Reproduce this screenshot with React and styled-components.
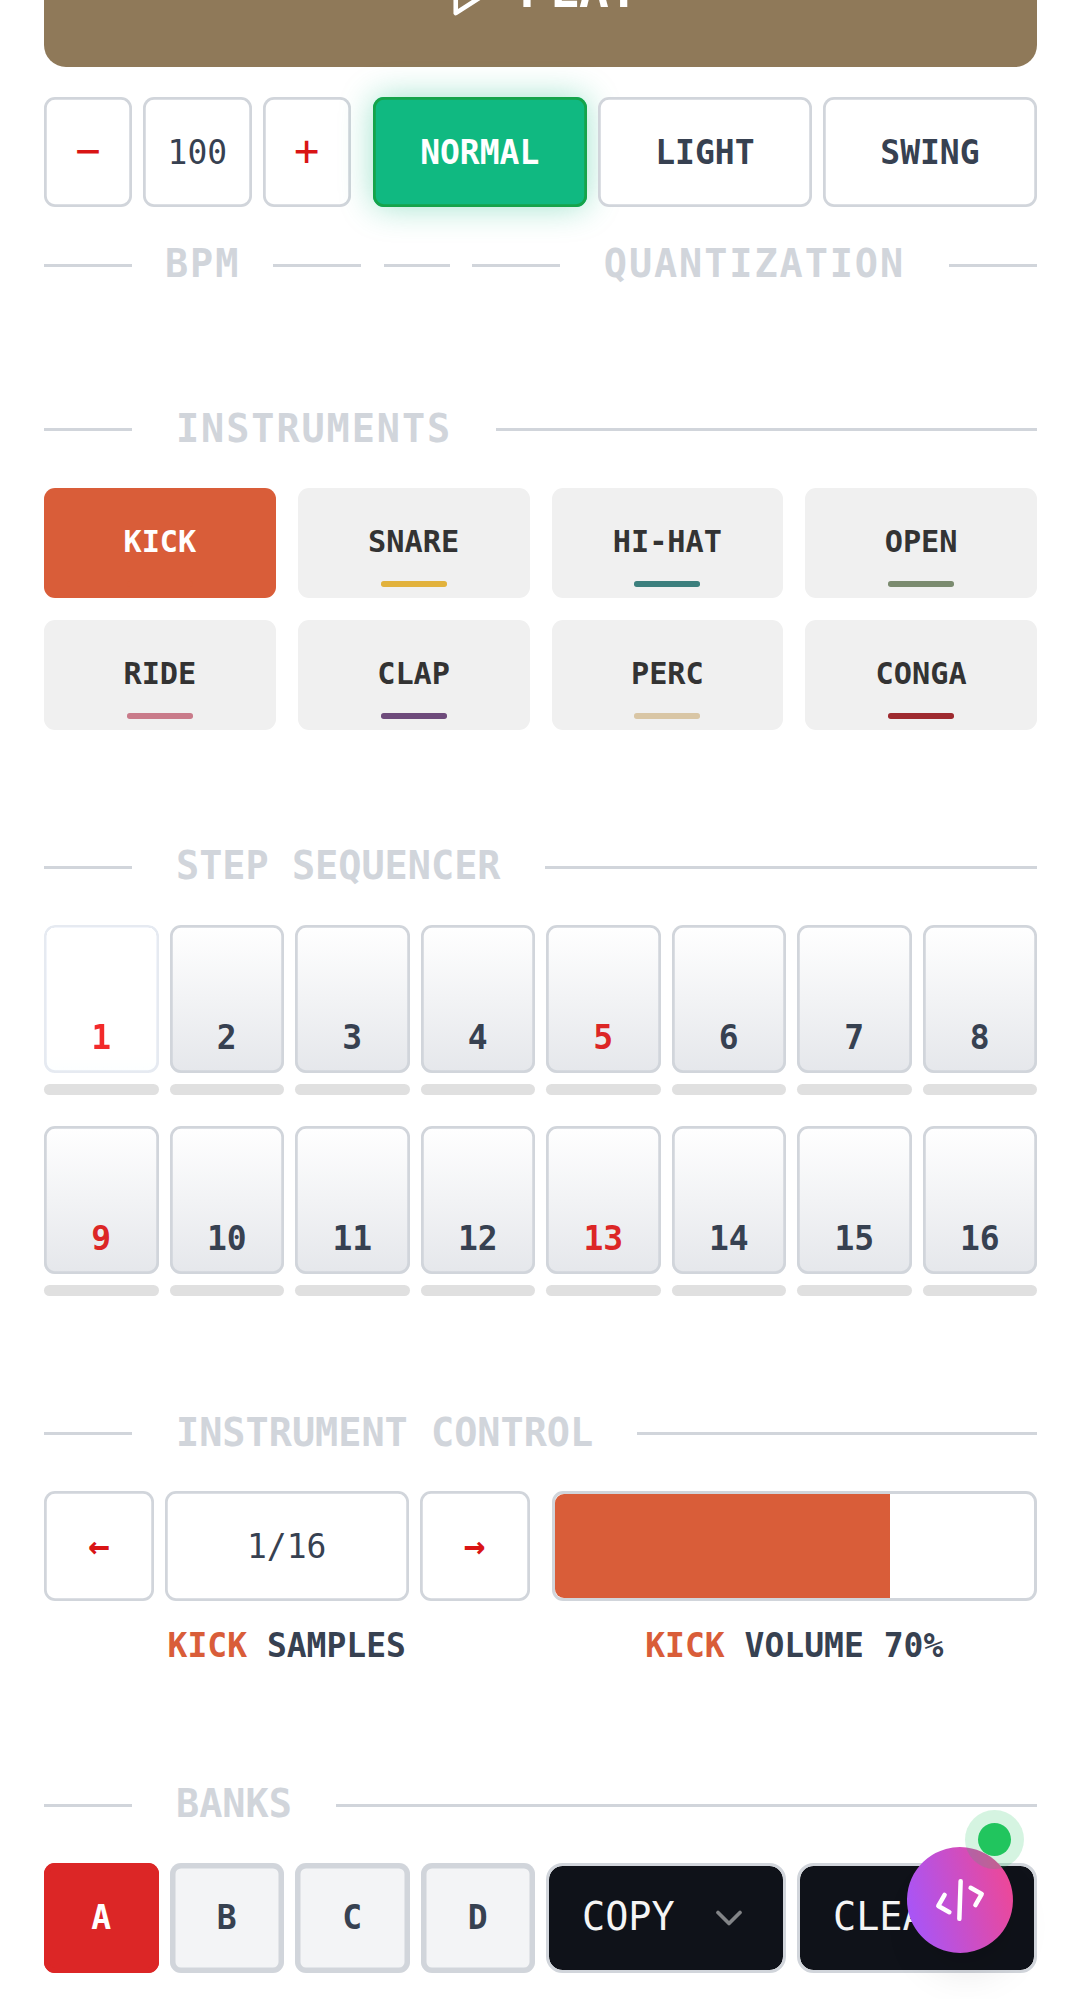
import React from "react";
import styled, { createGlobalStyle } from "styled-components";
import { ChevronDown, CodeXml } from "lucide-react";

const LINE = "#d1d5db";
const INK = "#374151";
const RED = "#dc2626";
const KICK = "#d95d39";

const GlobalStyle = createGlobalStyle`
  *, *::before, *::after { box-sizing: border-box; }
  html { font-size: 44px; }
  body {
    margin: 0;
    background: #fff;
    color: ${INK};
    font-family: "DejaVu Sans Mono", monospace;
    overflow: hidden;
  }
  button {
    font-family: inherit;
    border: 0;
    padding: 0;
    margin: 0;
  }
`;

const Page = styled.main`
  width: 1081px;
  height: 1999px;
  padding: 0 44px;
  overflow: hidden;
  display: flex;
  flex-direction: column;
`;

const PlayButton = styled.button`
  flex: none;
  height: 148.5px;
  margin-top: -81.6px;
  border-radius: 22px;
  background: #8f7959;
  color: #fff;
  display: flex;
  align-items: center;
  justify-content: center;
  gap: 22px;
  font-size: 49.5px;
  font-weight: 700;
  line-height: 1;
`;

const PlayIcon = styled.svg.attrs({
  viewBox: "0 0 24 24",
  fill: "none",
  stroke: "currentColor",
  strokeWidth: 2,
  strokeLinecap: "round",
  strokeLinejoin: "round",
})`
  flex: none;
  width: 55px;
  height: 55px;
`;

const PlayText = styled.span`
  padding-bottom: 4px;
`;

const Transport = styled.div`
  flex: none;
  margin-top: 30.4px;
  height: 110px;
  display: grid;
  grid-template-columns: 306.7px 1fr;
  gap: 22px;
`;

const Stepper = styled.div`
  display: grid;
  grid-template-columns: ${(p) => p.$side}px 1fr ${(p) => p.$side}px;
  gap: 11px;
  height: 110px;
`;

const Triple = styled.div`
  display: grid;
  grid-template-columns: repeat(3, 1fr);
  gap: 11px;
`;

const Outlined = styled.button`
  display: flex;
  align-items: center;
  justify-content: center;
  border-radius: 11px;
  background: ${(p) => (p.$active ? "#10b981" : "#fff")};
  color: ${(p) => (p.$active ? "#fff" : INK)};
  font-size: 33px;
  font-weight: ${(p) => (p.$plain ? 400 : 700)};
  line-height: 1;
  box-shadow: inset 0 0 0 2.75px ${(p) => (p.$active ? "#16a34a" : LINE)}
    ${(p) => (p.$active ? ", 0 0 33px rgba(16, 185, 129, 0.4)" : "")};
`;

const SignButton = styled(Outlined)`
  color: #d91414;
  font-size: 42px;
  font-weight: 400;
  padding-bottom: 2px;
`;

const ArrowButton = styled(Outlined)`
  color: #d91414;
  font-size: 36px;
`;

const Labels = styled.div`
  flex: none;
  margin-top: 35px;
  height: 44px;
  display: flex;
  align-items: center;
`;

const LabelGroup = styled.div`
  display: flex;
  align-items: center;
  gap: ${(p) => p.$gap}px;
  ${(p) => p.$grow && "flex: 1;"}
`;

const TrailingGroup = styled(LabelGroup)`
  margin-left: 22.5px;
`;

const Rule = styled.span`
  height: 3px;
  margin-top: 2px;
  background: ${LINE};
  ${(p) => (p.$w ? `flex: none; width: ${p.$w}px;` : "flex: 1;")}
`;

const Title = styled.h2`
  margin: 0;
  color: ${LINE};
  font-size: 38.5px;
  font-weight: 700;
  line-height: 44px;
  white-space: nowrap;
  letter-spacing: ${(p) => (p.$wide ? "0.05em" : "0")};
`;

const SectionHead = styled.header`
  flex: none;
  height: 44px;
  margin-top: ${(p) => p.$top}px;
  display: flex;
  align-items: center;
  gap: 44px;
`;

const Pads = styled.div`
  flex: none;
  margin-top: 36.6px;
  display: grid;
  grid-template-columns: repeat(4, 1fr);
  grid-auto-rows: 110px;
  gap: 22px;
`;

const Pad = styled.button`
  position: relative;
  border-radius: 11px;
  padding-bottom: 1px;
  background: ${(p) => (p.$on ? p.$tone : "#f0f0f0")};
  color: ${(p) => (p.$on ? "#fff" : "#333")};
  font-size: 30.25px;
  font-weight: 700;
  line-height: 1;
  &::after {
    content: "";
    position: absolute;
    left: 50%;
    bottom: 11px;
    width: 66px;
    height: 5.5px;
    margin-left: -33px;
    border-radius: 2.75px;
    background: ${(p) => p.$tone};
  }
`;

const Keys = styled.div`
  flex: none;
  margin-top: 36.6px;
  display: grid;
  grid-template-columns: repeat(8, 1fr);
  column-gap: 11px;
  row-gap: 30.25px;
`;

const Step = styled.div`
  display: flex;
  flex-direction: column;
  gap: 11px;
`;

const Key = styled.button`
  height: 148.5px;
  border-radius: 11px;
  display: flex;
  align-items: flex-end;
  justify-content: center;
  padding-bottom: 19.5px;
  background: linear-gradient(to bottom, #ffffff, #e5e7eb);
  box-shadow: inset 0 0 0 2.75px ${LINE};
  color: ${(p) => (p.$beat ? RED : INK)};
  font-size: 33px;
  font-weight: 700;
  line-height: 1;
  ${(p) => p.$current && "filter: brightness(1.1);"}
`;

const Led = styled.span`
  height: 11px;
  border-radius: 5.5px;
  background: #e0e0e0;
`;

const Halves = styled.div`
  flex: none;
  margin-top: 36.6px;
  display: grid;
  grid-template-columns: repeat(2, 1fr);
  column-gap: 22px;
`;

const Control = styled.div`
  display: flex;
  flex-direction: column;
  gap: 22px;
`;

const Volume = styled.div`
  height: 110px;
  border: 3px solid ${LINE};
  border-radius: 11px;
  background: #fff;
`;

const VolumeFill = styled.div`
  height: 100%;
  border-radius: 9px 0 0 9px;
  background: ${KICK};
`;

const Caption = styled.p`
  margin: 0;
  padding-top: 1px;
  height: 44px;
  text-align: center;
  font-size: 33px;
  font-weight: 700;
  line-height: 44px;
  white-space: pre;
`;

const Accent = styled.span`
  color: ${KICK};
`;

const Banks = styled.div`
  flex: none;
  margin-top: 36.6px;
  height: 110px;
  display: grid;
  grid-template-columns: repeat(8, 1fr);
  column-gap: 11px;
`;

const Bank = styled.button`
  border-radius: 11px;
  padding-bottom: 1px;
  background: ${(p) => (p.$on ? RED : "#f3f4f6")};
  color: ${(p) => (p.$on ? "#fff" : INK)};
  box-shadow: inset 0 0 0 5.5px ${(p) => (p.$on ? RED : LINE)};
  font-size: 33px;
  font-weight: 700;
  line-height: 1;
`;

const Select = styled.button`
  grid-column: span 2;
  display: flex;
  align-items: center;
  justify-content: space-between;
  padding: 0 32px 0 33px;
  border: 3px solid ${LINE};
  border-radius: 16.5px;
  background: #0f1219;
  background-clip: padding-box;
  color: #f5f5f5;
  font-size: 38.5px;
  line-height: 1;
  overflow: hidden;
  svg { flex: none; opacity: 0.5; }
`;

const SelectText = styled.span`
  padding-bottom: 1px;
`;

const Fab = styled.button`
  position: fixed;
  left: 906.7px;
  top: 1847.3px;
  width: 106px;
  height: 106px;
  border-radius: 50%;
  display: flex;
  align-items: center;
  justify-content: center;
  color: #fff;
  background: linear-gradient(to right, #a855f7, #ec4899);
  box-shadow: 0 27.5px 41px -8px rgba(0, 0, 0, 0.1), 0 11px 16px -11px rgba(0, 0, 0, 0.1);
  transform: rotate(-15.4deg);
`;

const Status = styled.span`
  position: fixed;
  left: 978.2px;
  top: 1823px;
  width: 33px;
  height: 33px;
  border-radius: 50%;
  background: #22c55e;
  &::after {
    content: "";
    position: absolute;
    inset: -13px;
    border-radius: 50%;
    background: #22c55e;
    opacity: 0.19;
  }
`;

const instruments = [
  ["KICK", KICK],
  ["SNARE", "#e2b23c"],
  ["HI-HAT", "#3c7f7d"],
  ["OPEN", "#7b8b6f"],
  ["RIDE", "#c97b8a"],
  ["CLAP", "#6e4b7b"],
  ["PERC", "#d9c6a5"],
  ["CONGA", "#9e2a2f"],
];

const volume = 70;

function Section({ title, wide, top }) {
  return (
    <SectionHead $top={top}>
      <Rule $w={88} />
      <Title $wide={wide}>{title}</Title>
      <Rule />
    </SectionHead>
  );
}

export default function App() {
  return (
    <Page>
      <GlobalStyle />
      <PlayButton>
        <PlayIcon>
          <polygon points="6 3 20 12 6 21" />
        </PlayIcon>
        <PlayText>PLAY</PlayText>
      </PlayButton>

      <Transport>
        <Stepper $side={88}>
          <SignButton>−</SignButton>
          <Outlined $plain>100</Outlined>
          <SignButton>+</SignButton>
        </Stepper>
        <Triple>
          <Outlined $active>NORMAL</Outlined>
          <Outlined>LIGHT</Outlined>
          <Outlined>SWING</Outlined>
        </Triple>
      </Transport>

      <Labels>
        <LabelGroup $gap={33}>
          <Rule $w={88} />
          <Title $wide>BPM</Title>
          <Rule $w={88} />
        </LabelGroup>
        <TrailingGroup $gap={22} $grow>
          <Rule $w={66} />
          <LabelGroup $gap={44} $grow>
            <Rule $w={88} />
            <Title $wide>QUANTIZATION</Title>
            <Rule />
          </LabelGroup>
        </TrailingGroup>
      </Labels>

      <Section title="INSTRUMENTS" wide top={120.7} />
      <Pads>
        {instruments.map(([name, tone], i) => (
          <Pad key={name} $tone={tone} $on={i === 0}>
            {name}
          </Pad>
        ))}
      </Pads>

      <Section title="STEP SEQUENCER" top={114.8} />
      <Keys>
        {Array.from({ length: 16 }, (_, i) => (
          <Step key={i}>
            <Key $beat={i % 4 === 0} $current={i === 0}>
              {i + 1}
            </Key>
            <Led />
          </Step>
        ))}
      </Keys>

      <Section title="INSTRUMENT CONTROL" top={114.5} />
      <Halves>
        <Control>
          <Stepper $side={110}>
            <ArrowButton>←</ArrowButton>
            <Outlined $plain>1/16</Outlined>
            <ArrowButton>→</ArrowButton>
          </Stepper>
          <Caption>
            <Accent>KICK</Accent> SAMPLES
          </Caption>
        </Control>
        <Control>
          <Volume>
            <VolumeFill style={{ width: `${volume}%` }} />
          </Volume>
          <Caption>
            <Accent>KICK</Accent> VOLUME {volume}%
          </Caption>
        </Control>
      </Halves>

      <Section title="BANKS" top={114.7} />
      <Banks>
        {["A", "B", "C", "D"].map((b) => (
          <Bank key={b} $on={b === "A"}>
            {b}
          </Bank>
        ))}
        {["COPY", "CLEAR"].map((t) => (
          <Select key={t}>
            <SelectText>{t}</SelectText>
            {t === "COPY" && <ChevronDown size={44} strokeWidth={2} />}
          </Select>
        ))}
      </Banks>

      <Fab aria-label="Code">
        <CodeXml size={54} strokeWidth={2} />
      </Fab>
      <Status />
    </Page>
  );
}
